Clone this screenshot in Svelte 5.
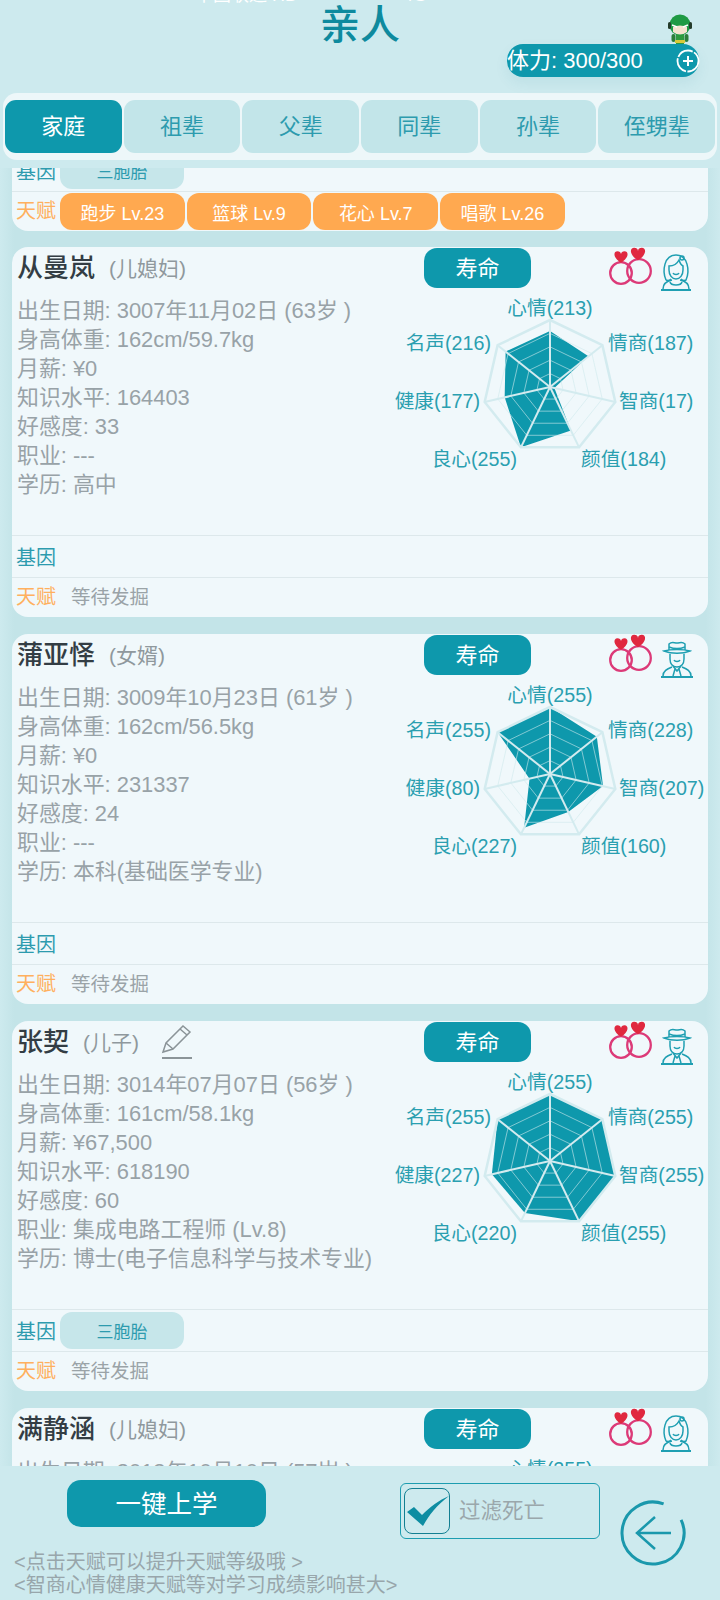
<script>
	const tabs = ['家庭', '祖辈', '父辈', '同辈', '孙辈', '侄甥辈'];
	const statNames = ['心情', '情商', '智商', '颜值', '良心', '健康', '名声'];
	const labelPos = [
		{ x: 170, y: -79, anchor: 'middle' },
		{ x: 228, y: -44, anchor: 'start' },
		{ x: 239, y: 14, anchor: 'start' },
		{ x: 201, y: 72, anchor: 'start' },
		{ x: 137, y: 72, anchor: 'end' },
		{ x: 100, y: 14, anchor: 'end' },
		{ x: 111, y: -44, anchor: 'end' }
	];

	const people = [
		{
			name: '从曼岚',
			relation: '(儿媳妇)',
			gender: 'f',
			lines: [
				'出生日期: 3007年11月02日 (63岁 )',
				'身高体重: 162cm/59.7kg',
				'月薪: ¥0',
				'知识水平: 164403',
				'好感度: 33',
				'职业: ---',
				'学历: 高中'
			],
			stats: [213, 187, 17, 184, 255, 177, 216]
		},
		{
			name: '蒲亚怿',
			relation: '(女婿)',
			gender: 'm',
			lines: [
				'出生日期: 3009年10月23日 (61岁 )',
				'身高体重: 162cm/56.5kg',
				'月薪: ¥0',
				'知识水平: 231337',
				'好感度: 24',
				'职业: ---',
				'学历: 本科(基础医学专业)'
			],
			stats: [255, 228, 207, 160, 227, 80, 255]
		},
		{
			name: '张契',
			relation: '(儿子)',
			gender: 'm',
			editable: true,
			gene: '三胞胎',
			lines: [
				'出生日期: 3014年07月07日 (56岁 )',
				'身高体重: 161cm/58.1kg',
				'月薪: ¥67,500',
				'知识水平: 618190',
				'好感度: 60',
				'职业: 集成电路工程师 (Lv.8)',
				'学历: 博士(电子信息科学与技术专业)'
			],
			stats: [255, 255, 255, 255, 220, 227, 255]
		},
		{
			name: '满静涵',
			relation: '(儿媳妇)',
			gender: 'f',
			lines: ['出生日期: 3013年10月10日 (57岁 )'],
			stats: [255]
		}
	];

	const talents = ['跑步 Lv.23', '篮球 Lv.9', '花心 Lv.7', '唱歌 Lv.26'];

	const cx = 170;
	const cy = 90;
	const R = 67;
	const heart = 'M0 5C-7 1-7-5-3-5-1.500-5 0-4 0-2.500 0-4 1.500-5 3-5 7-5 7 1 0 5z';

	function point(i, r) {
		const a = (i * 2 * Math.PI) / 7 - Math.PI / 2;
		return [cx + r * Math.cos(a), cy + r * Math.sin(a)];
	}

	function ring(r) {
		return [0, 1, 2, 3, 4, 5, 6].map((i) => point(i, r).join(',')).join(' ');
	}

	function shape(stats) {
		return stats.map((v, i) => point(i, (v / 255) * R).join(',')).join(' ');
	}
</script>

<div class="page">
	<div class="status"><span>中国联通 HD</span><span class="wifi">4G</span></div>

	<header class="top">
		<h1>亲人</h1>
		<div class="energy">
			<span class="energy-text">体力: 300/300</span>
			<svg class="plus" width="24" height="24" viewBox="0 0 24 24" fill="none" stroke="#fff">
				<circle cx="12" cy="12" r="10.500" stroke-width="1.800" stroke-dasharray="17 1.500" />
				<path d="M12 7v10M7 12h10" stroke-width="2" />
			</svg>
			<svg class="hero" width="26" height="32" viewBox="0 0 26 32">
				<rect x="9" y="20" width="8" height="10" fill="#2f9a3e" />
				<rect x="4.500" y="20" width="4" height="8" rx="2" fill="#2c7d3a" />
				<rect x="17.500" y="20" width="4" height="8" rx="2" fill="#2c7d3a" />
				<rect x="8" y="26" width="10" height="3" fill="#d9c93a" />
				<circle cx="13" cy="11" r="10.500" fill="#1f9a44" />
				<rect x="1" y="8" width="3" height="7" rx="1.500" fill="#243b2a" />
				<rect x="22" y="8" width="3" height="7" rx="1.500" fill="#243b2a" />
				<path d="M6 13q7-3 14 0v5q-7 5-14 0z" fill="#f6e3cf" />
				<path d="M5 11l5 2M21 11l-5 2" stroke="#fff" stroke-width="1.500" />
			</svg>
		</div>
	</header>

	<nav class="tabs">
		{#each tabs as tab, i}
			<div class="tab" class:active={i === 0}>{tab}</div>
		{/each}
	</nav>

	<section class="list">
		<article class="card tail">
			<div class="row gene-row">
				<span class="tag gene">基因</span>
				<span class="pill gene-pill">三胞胎</span>
			</div>
			<div class="row talent-row">
				<span class="tag talent">天赋</span>
				{#each talents as t}
					<span class="pill talent-pill">{t}</span>
				{/each}
			</div>
		</article>

		{#each people as p}
			<article class="card">
				<div class="main">
					<div class="info">
						<div class="title">
							<span class="name">{p.name}</span>
							<span class="relation">{p.relation}</span>
							{#if p.editable}
								<svg class="edit" width="32" height="36" viewBox="0 0 32 36" fill="none" stroke="#8b9498" stroke-width="1.500">
									<path d="M2 28l3-9L22 2l7 6-17 17z" />
									<path d="M5 19l7 6M19 5l7 6" />
									<path d="M1 34h30" stroke-width="2.200" />
								</svg>
							{/if}
						</div>
						{#each p.lines as line}
							<div class="line">{line}</div>
						{/each}
					</div>
					<div class="side">
						<div class="actions">
							<button class="life"><span>寿命</span></button>
							<svg class="rings" width="43" height="40" viewBox="0 0 43 40" fill="none">
								<circle cx="12" cy="26" r="10.800" stroke="#dc3a78" stroke-width="2.300" />
								<circle cx="30" cy="24" r="11.800" stroke="#dc3a78" stroke-width="2.300" />
								<path d={heart} transform="translate(12 10) scale(1.150)" fill="#e0283f" />
								<path d={heart} transform="translate(29 7) scale(1.250)" fill="#e0283f" />
							</svg>
							{#if p.gender === 'f'}
								<svg class="avatar" width="32" height="38" viewBox="0 0 32 38" fill="none" stroke="#1f9fb2" stroke-width="1.500">
									<path d="M6 27C2 18 4 2 16 2s14 16 10 25c-2 1-4 0-5-1M6 27c2 1 4 0 5-1" />
									<path d="M9 13c4 0 8-2 10-6 1 3 2 5 4 6v4c0 5-3 9-7 9s-7-4-7-9z" />
									<path d="M13 20c1 2 5 2 6 0" />
									<circle cx="22" cy="5" r="2" />
									<path d="M12 27c-5 1-9 3-9 9M20 27c5 1 9 3 9 9M10 29c1 4 11 4 12 0" />
									<path d="M1 37h30" stroke-width="2" />
								</svg>
							{:else}
								<svg class="avatar" width="34" height="38" viewBox="0 0 34 38" fill="none" stroke="#1f9fb2" stroke-width="1.500">
									<path d="M9 10V4c3-3 5-1 8-1s5-2 8 1v6" />
									<path d="M9 7c5 2 11 2 16 0" />
									<path d="M4 11c7-2 19-2 26 0-7 3-19 3-26 0z" />
									<path d="M10 14v5c0 5 3 8 7 8s7-3 7-8v-5" />
									<path d="M14 20c1 2 5 2 6 0" />
									<path d="M13 26l4 5 4-5M15 29l-2 7M19 29l2 7" />
									<path d="M3 36c0-5 4-7 9-9M31 36c0-5-4-7-9-9" />
									<path d="M1 37h32" stroke-width="2" />
								</svg>
							{/if}
						</div>
						<svg class="radar" width="328" height="238" viewBox="0 0 328 238">
							<polygon points={shape(p.stats)} fill="#0e98ac" />
							{#each [0.2, 0.4, 0.6, 0.8] as k}
								<polygon points={ring(R * k)} fill="none" stroke="#cfe9ed" stroke-width="1" opacity="0.6" />
							{/each}
							<polygon points={ring(R)} fill="none" stroke="#d3ebef" stroke-width="2.500" />
							{#each statNames as _, i}
								<line x1={cx} y1={cy} x2={point(i, R)[0]} y2={point(i, R)[1]} stroke="#d3ebef" stroke-width="2" />
							{/each}
							{#each p.stats as v, i}
								<text
									x={labelPos[i].x}
									y={cy + labelPos[i].y + 7}
									text-anchor={labelPos[i].anchor}
								>{statNames[i]}({v})</text>
							{/each}
						</svg>
					</div>
				</div>
				<div class="row gene-row">
					<span class="tag gene">基因</span>
					{#if p.gene}
						<span class="pill gene-pill">{p.gene}</span>
					{/if}
				</div>
				<div class="row talent-row">
					<span class="tag talent">天赋</span>
					<span class="waiting">等待发掘</span>
				</div>
			</article>
		{/each}
	</section>

	<footer class="bottom">
		<div class="left">
			<button class="school"><span>一键上学</span></button>
			<p class="hint">&lt;点击天赋可以提升天赋等级哦 &gt;<br />&lt;智商心情健康天赋等对学习成绩影响甚大&gt;</p>
		</div>
		<div class="filter">
			<span class="check">
				<svg width="46" height="46" viewBox="0 0 46 46">
					<path d="M3 24l7-5 8 8C26 19 35 12 45 8 33 17 25 27 19 38z" fill="#0e8da2" />
				</svg>
			</span>
			<span class="filter-text">过滤死亡</span>
		</div>
		<svg class="back" width="66" height="66" viewBox="0 0 66 66" fill="none" stroke="#1a98ac">
			<path d="M43.600 3.900A31 31 0 1 0 61.100 19.900" stroke-width="3" />
			<path d="M51 33H17M35 17L17 33l18 16" stroke-width="2.500" />
		</svg>
	</footer>
</div>

<style>
	:global(body) {
		margin: 0;
		background: #cdeaee;
	}

	.page {
		position: relative;
		width: 720px;
		height: 1600px;
		overflow: hidden;
		background: #cdeaee;
		font-family: 'Liberation Sans', 'Noto Sans CJK SC', sans-serif;
	}

	.status {
		position: absolute;
		top: -14px;
		left: 195px;
		display: flex;
		gap: 105px;
		color: #fff;
		font-size: 18px;
		line-height: 18px;
	}

	.top {
		display: grid;
		grid-template-rows: 44px 33px;
		height: 93px;
	}

	h1 {
		margin: 0;
		font-size: 40px;
		font-weight: 500;
		line-height: 50px;
		text-align: center;
		color: #0e8a9e;
	}

	.energy {
		position: relative;
		justify-self: end;
		display: flex;
		align-items: center;
		justify-content: space-between;
		box-sizing: border-box;
		width: 192px;
		height: 33px;
		margin-right: 21px;
		border-radius: 16px;
		background: #0e98ac;
		box-shadow: 0 6px 14px rgba(14, 120, 140, 0.08);
		color: #fff;
		font-size: 22px;
	}

	.energy-text {
		position: relative;
		top: -3px;
	}

	.plus {
		margin-right: -1px;
	}

	.hero {
		position: absolute;
		right: 6px;
		top: -30px;
	}

	.tabs {
		display: flex;
		gap: 2px;
		box-sizing: border-box;
		height: 67px;
		margin: 0 3px;
		padding: 7px 2px;
		border-radius: 14px;
		background: #edf7f9;
	}

	.tab {
		flex: 1;
		display: flex;
		align-items: center;
		justify-content: center;
		box-sizing: border-box;
		padding-bottom: 5px;
		border-radius: 11px;
		background: #c2e5e9;
		color: #2d9bae;
		font-size: 22px;
	}

	.tab.active {
		background: #0e98ac;
		color: #fff;
	}

	.list {
		height: 1298px;
		margin-top: 8px;
		padding: 0 12px;
		overflow: hidden;
		background: linear-gradient(90deg, #cdeaee, #c3e4e8 2%, #c3e4e8 98%, #cdeaee);
	}

	.card {
		height: 370px;
		margin-bottom: 17px;
		border-radius: 16px;
		overflow: hidden;
		background: #f0f8fb;
	}

	.tail {
		height: 82px;
		margin-top: -19px;
		margin-bottom: 16px;
		border-radius: 0 0 16px 16px;
	}

	.main {
		display: flex;
		height: 288px;
	}

	.info {
		flex: 0 0 368px;
		box-sizing: border-box;
		padding-left: 5px;
		color: #98a2a7;
		font-size: 21.900px;
		line-height: 29px;
		white-space: nowrap;
	}

	.title {
		display: flex;
		align-items: center;
		height: 42px;
		margin-bottom: 7px;
	}

	.name {
		margin-right: 14px;
		color: #333d44;
		font-size: 26px;
		font-weight: 500;
	}

	.relation {
		color: #8f989d;
		font-size: 21px;
	}

	.edit {
		margin-left: 22px;
	}

	.side {
		flex: 1;
		min-width: 0;
	}

	.actions {
		display: flex;
		align-items: flex-start;
		height: 50px;
		padding-left: 44px;
	}

	.life {
		flex: none;
		width: 107px;
		height: 40px;
		margin-top: 1px;
		padding: 0 0 5px;
		border: none;
		border-radius: 13px;
		background: #0e98ac;
		color: #fff;
		font-family: inherit;
		font-size: 22px;
	}

	.rings {
		flex: none;
		margin: 0 0 0 78px;
	}

	.avatar {
		flex: none;
		margin: 6px 0 0 8px;
	}

	.radar {
		display: block;
		overflow: visible;
	}

	.radar text {
		fill: #2a9fb0;
		font-size: 19.700px;
	}

	.row {
		display: flex;
		align-items: center;
		box-sizing: border-box;
		padding-left: 4px;
		border-top: 1px solid #dde8eb;
	}

	.gene-row {
		height: 42px;
	}

	.talent-row {
		height: 40px;
		gap: 2px;
	}

	.tail .gene-row {
		border-top: none;
	}

	.tag {
		flex: none;
		width: 44px;
		font-size: 20px;
	}

	.talent-row .tag {
		width: 42px;
		position: relative;
		top: -2px;
	}

	.gene {
		color: #2d9bae;
	}

	.talent {
		color: #ffb05e;
	}

	.pill {
		display: flex;
		align-items: center;
		justify-content: center;
		box-sizing: border-box;
		width: 124px;
		height: 37px;
		border-radius: 12px;
		font-size: 18px;
	}

	.gene-pill {
		background: #c6e6ea;
		color: #2d9bae;
		font-size: 17px;
	}

	.talent-pill {
		width: 124.700px;
		background: #ffa950;
		color: #fff;
	}

	.waiting {
		margin-left: 11px;
		position: relative;
		top: -2px;
		color: #9aa3a7;
		font-size: 19.500px;
	}

	.bottom {
		display: flex;
		align-items: flex-start;
		height: 134px;
	}

	.left {
		flex: 0 0 386px;
		min-width: 0;
		box-sizing: border-box;
		padding: 14px 0 0 14px;
	}

	.school {
		display: block;
		width: 199px;
		height: 47px;
		margin-left: 53px;
		padding: 0 0 5px;
		border: none;
		border-radius: 14px;
		background: #0e98ac;
		color: #fff;
		font-family: inherit;
		font-size: 25.500px;
	}

	.hint {
		margin: 24px 0 0;
		color: #98a6ab;
		font-size: 20px;
		line-height: 23px;
		white-space: nowrap;
	}

	.filter {
		flex: none;
		display: flex;
		align-items: center;
		box-sizing: border-box;
		width: 200px;
		height: 56px;
		margin: 17px 0 0 14px;
		padding-left: 3px;
		border: 1.500px solid #1d9db0;
		border-radius: 6px;
	}

	.check {
		flex: none;
		display: flex;
		box-sizing: border-box;
		width: 46px;
		height: 46px;
		border: 1.500px solid #127f92;
		border-radius: 8px;
	}

	.check svg {
		margin: -1.500px;
		flex: none;
	}

	.filter-text {
		position: relative;
		top: -3px;
		margin-left: 9px;
		color: #9aa7ab;
		font-size: 21.500px;
	}

	.back {
		flex: none;
		margin: 34px 0 0 20px;
	}
</style>
